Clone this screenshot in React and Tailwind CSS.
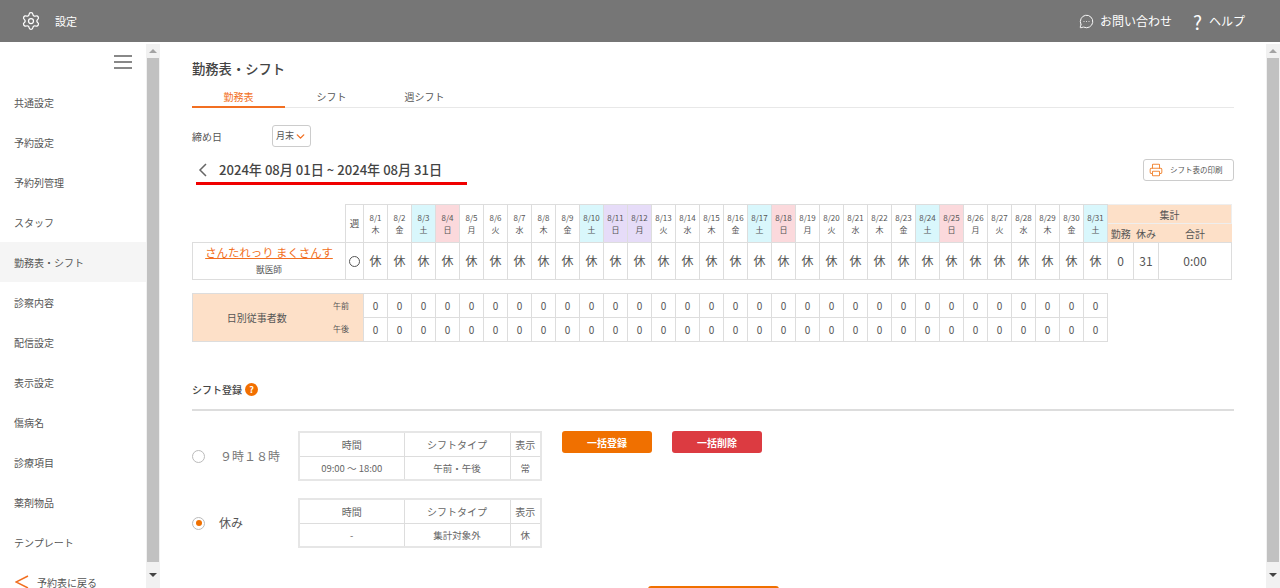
import React from 'react';
import { Settings, MessageCircleMore, Printer, ChevronDown } from 'lucide-react';

const menu = ['共通設定', '予約設定', '予約列管理', 'スタッフ', '勤務表・シフト', '診察内容', '配信設定', '表示設定', '傷病名', '診療項目', '薬剤物品', 'テンプレート'];
const weekdays = ['木', '金', '土', '日', '月', '火', '水'];
const days = Array.from({ length: 31 }, (_, i) => ({ day: i + 1, week: weekdays[i % 7] }));

const dayBg = (d) => {
  if (d.day === 11 || d.day === 12) return 'bg-[#e6dcf8]';
  if (d.week === '土') return 'bg-[#d9f7fc]';
  if (d.week === '日') return 'bg-[#fbd9dc]';
  return 'bg-white';
};

const ScrollBar = () => (
  <div className="flex flex-col w-[14px] shrink-0 bg-[#f1f1f1]">
    <div className="h-[14px] shrink-0 flex items-center justify-center">
      <div className="w-0 h-0 border-x-[4px] border-x-transparent border-b-[4px] border-b-[#a3a3a3]" />
    </div>
    <div className="flex-1 mx-[1px] bg-[#c1c1c1]" />
    <div className="h-[26px] shrink-0 flex items-center justify-center">
      <div className="w-0 h-0 border-x-[4px] border-x-transparent border-t-[4px] border-t-[#444]" />
    </div>
  </div>
);

const ShiftTable = ({ time, type, mark }) => (
  <table className="table-fixed border-collapse w-[242px] text-center text-[#666] border-2 border-[#e6e6e6]">
    <colgroup>
      <col className="w-[105px]" />
      <col className="w-[106px]" />
      <col className="w-[31px]" />
    </colgroup>
    <tbody>
      <tr className="h-[24px] text-[10px]">
        <td className="border border-[#ddd] p-0">時間</td>
        <td className="border border-[#ddd] p-0">シフトタイプ</td>
        <td className="border border-[#ddd] p-0">表示</td>
      </tr>
      <tr className="h-[24px] text-[9.5px]">
        <td className="border border-[#ddd] p-0">{time}</td>
        <td className="border border-[#ddd] p-0">{type}</td>
        <td className="border border-[#ddd] p-0">{mark}</td>
      </tr>
    </tbody>
  </table>
);

const App = () => {
  return (
    <div className="w-[1280px] h-[588px] overflow-hidden bg-white flex flex-col font-['Noto_Sans_CJK_JP','Noto_Sans',sans-serif] text-[#555]">
      <header className="h-[42px] shrink-0 bg-[#767676] flex items-center justify-between text-white pl-[21px] pr-[35px]">
        <div className="flex items-center gap-[14px]">
          <Settings className="w-[20px] h-[20px]" strokeWidth={1.5} />
          <span className="text-[11px]">設定</span>
        </div>
        <div className="flex items-center text-[12px]">
          <MessageCircleMore className="w-[15px] h-[15px] mr-[6px]" strokeWidth={1.5} />
          <span>お問い合わせ</span>
          <span className="text-[19px] leading-none ml-[21px] mr-[7px]">?</span>
          <span>ヘルプ</span>
        </div>
      </header>
      <div className="flex-1 flex min-h-0 pt-[2px]">
        <aside className="w-[146px] shrink-0 flex flex-col overflow-hidden">
          <div className="h-[38px] shrink-0 flex justify-end pr-[14px] pt-[11px]">
            <div className="w-[18px] h-[14px] flex flex-col justify-between">
              <div className="h-[2px] bg-[#888]" />
              <div className="h-[2px] bg-[#888]" />
              <div className="h-[2px] bg-[#888]" />
            </div>
          </div>
          {menu.map((item) => (
            <div key={item} className={`h-[40px] shrink-0 flex items-center pl-[14px] text-[10px] ${item === '勤務表・シフト' ? 'bg-[#f5f5f5]' : ''}`}>
              {item}
            </div>
          ))}
          <div className="h-[40px] shrink-0 flex items-center pl-[15px] text-[10px]">
            <svg width="14" height="14" viewBox="0 0 14 14" fill="none" className="mr-[8px] shrink-0">
              <polyline points="13,1 1,7 13,13" stroke="#f26f21" strokeWidth="1.5" />
            </svg>
            予約表に戻る
          </div>
        </aside>
        <ScrollBar />
        <main className="flex-1 min-w-0 overflow-hidden pl-[32px] pr-[32px] pt-[15px]">
          <h1 className="text-[13.3px] leading-[20px] font-medium text-[#444]">勤務表・シフト</h1>
          <nav className="flex h-[20px] mt-[9px] border-b border-[#e8e8e8] text-[10px] text-center w-[1042px]">
            <div className="w-[93px] text-[#f26f21] border-b-2 border-[#f26f21] h-[20px] leading-[18px]">勤務表</div>
            <div className="w-[93px] leading-[18px]">シフト</div>
            <div className="w-[93px] leading-[18px]">週シフト</div>
          </nav>
          <div className="flex items-center mt-[17px] h-[22px]">
            <span className="text-[10px] w-[80px]">締め日</span>
            <div className="w-[39px] h-[22px] border border-[#ccc] rounded-[3px] flex items-center justify-center text-[9px]">
              月末
              <ChevronDown className="w-[13px] h-[13px] text-[#f26f21]" strokeWidth={2.5} />
            </div>
          </div>
          <div className="flex justify-between items-start mt-[10px] w-[1042px]">
            <div className="w-[271px] border-b-[3px] border-[#f00000] h-[28px] ml-[4px] flex items-center">
              <svg width="10" height="16" viewBox="0 0 10 16" fill="none" className="shrink-0 ml-[1px]">
                <polyline points="9,2 3,8 9,14" stroke="#666" strokeWidth="1.5" />
              </svg>
              <span className="text-[13.1px] font-medium text-[#444] ml-[12px] whitespace-nowrap">2024年 08月 01日 ~ 2024年 08月 31日</span>
            </div>
            <div className="w-[91px] h-[22px] mt-[2px] border border-[#ccc] rounded-[3px] flex items-center pl-[5px] text-[7.5px]">
              <Printer className="w-[14px] h-[14px] text-[#f28b3c] mr-[7px]" strokeWidth={1.75} />
              シフト表の印刷
            </div>
          </div>

          <table className="table-fixed border-collapse w-[1039px] mt-[19px] text-center">
            <colgroup>
              <col className="w-[153px]" />
              <col className="w-[18px]" />
              {days.map((d) => <col key={d.day} className="w-[24px]" />)}
              <col className="w-[26px]" />
              <col className="w-[25px]" />
              <col className="w-[73px]" />
            </colgroup>
            <tbody>
              <tr className="h-[19px]">
                <td rowSpan={2} />
                <td rowSpan={2} className="border border-[#ddd] text-[9.5px] p-0">週</td>
                {days.map((d) => (
                  <td key={d.day} rowSpan={2} className={`border border-[#ddd] text-[8px] leading-[12px] p-0 ${dayBg(d)}`}>
                    <div className="whitespace-nowrap">8/{d.day}</div>
                    <div>{d.week}</div>
                  </td>
                ))}
                <td colSpan={3} className="border border-[#eee] bg-[#fde0c8] text-[10px] p-0">集計</td>
              </tr>
              <tr className="h-[19px] bg-[#fde0c8] text-[10px]">
                <td className="whitespace-nowrap p-0">勤務</td>
                <td className="whitespace-nowrap p-0">休み</td>
                <td className="p-0">合計</td>
              </tr>
              <tr className="h-[37px] text-[12px]">
                <td className="border border-[#ddd] leading-[14px] pb-[3px]">
                  <div className="text-[11.4px] text-[#f26f21] underline leading-[17px]">さんたれっり まくさんす</div>
                  <div className="text-[8.7px] mt-[3px] leading-[12px]">獣医師</div>
                </td>
                <td className="border border-[#ddd] p-0">
                  <div className="w-[11px] h-[11px] mx-auto rounded-full border-[1.5px] border-[#555]" />
                </td>
                {days.map((d) => <td key={d.day} className="border border-[#ddd] p-0">休</td>)}
                <td className="border border-[#ddd] p-0">0</td>
                <td className="border border-[#ddd] p-0">31</td>
                <td className="border border-[#ddd] p-0">0:00</td>
              </tr>
            </tbody>
          </table>

          <table className="table-fixed border-collapse w-[915px] mt-[13px] text-center">
            <colgroup>
              <col className="w-[126px]" />
              <col className="w-[45px]" />
              {days.map((d) => <col key={d.day} className="w-[24px]" />)}
            </colgroup>
            <tbody>
              <tr className="h-[24px]">
                <td rowSpan={2} className="border border-r-0 border-[#ddd] bg-[#fde0c8] text-[10px] pl-[2px]">日別従事者数</td>
                <td className="border-t border-r border-[#ddd] bg-[#fde0c8] text-[8px] text-right pr-[14px]">午前</td>
                {days.map((d) => <td key={d.day} className="border border-[#ddd] text-[10px] p-0">0</td>)}
              </tr>
              <tr className="h-[24px]">
                <td className="border-b border-r border-[#ddd] bg-[#fde0c8] text-[8px] text-right pr-[14px]">午後</td>
                {days.map((d) => <td key={d.day} className="border border-[#ddd] text-[10px] p-0">0</td>)}
              </tr>
            </tbody>
          </table>

          <div className="w-[1042px] mt-[40px] h-[29px] border-b-2 border-[#ddd] flex items-start">
            <span className="text-[10px] font-medium text-[#444] leading-[16px]">シフト登録</span>
            <span className="w-[13px] h-[13px] ml-[3px] mt-[1px] rounded-full bg-[#f26f00] text-white text-[9px] font-bold leading-[13px] text-center">?</span>
          </div>

          <div className="flex items-start mt-[20px]">
            <div className="flex items-center w-[106px] h-[50px]">
              <div className="w-[13px] h-[13px] rounded-full border border-[#bbb]" />
              <span className="text-[12px] ml-[15px] text-[#777]">９時１８時</span>
            </div>
            <ShiftTable time="09:00 〜 18:00" type="午前・午後" mark="常" />
            <div className="w-[90px] h-[22px] ml-[20px] rounded-[3px] bg-[#f07000] text-white text-[10px] font-bold flex items-center justify-center">一括登録</div>
            <div className="w-[90px] h-[22px] ml-[20px] rounded-[3px] bg-[#dc3b41] text-white text-[10px] font-bold flex items-center justify-center">一括削除</div>
          </div>

          <div className="flex items-start mt-[17px]">
            <div className="flex items-center w-[106px] h-[50px]">
              <div className="w-[13px] h-[13px] rounded-full border border-[#bbb] flex items-center justify-center">
                <div className="w-[6px] h-[6px] rounded-full bg-[#f07000]" />
              </div>
              <span className="text-[12px] ml-[14px]">休み</span>
            </div>
            <ShiftTable time="-" type="集計対象外" mark="休" />
          </div>

          <div className="w-[131px] h-[8px] ml-[456px] mt-[38px] rounded-t-[3px] bg-[#f07000]" />
        </main>
        <ScrollBar />
      </div>
    </div>
  );
};

export default App;
